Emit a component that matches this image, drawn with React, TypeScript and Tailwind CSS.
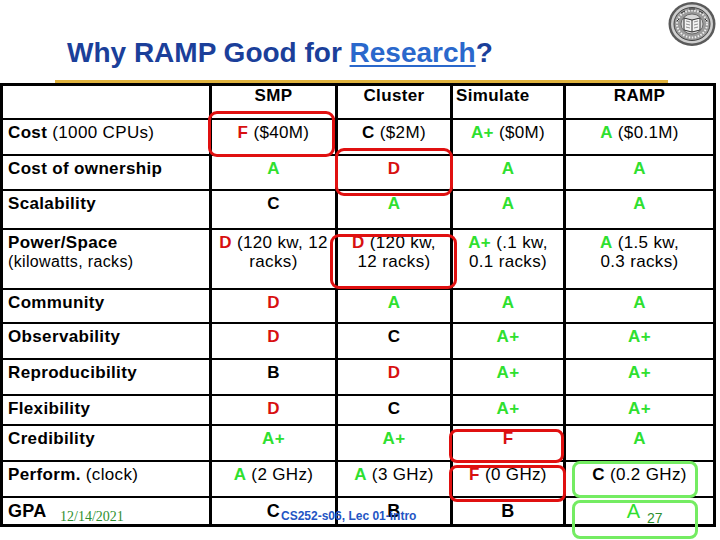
import React from "react"

const G = "text-[#2fe02f]"
const R = "text-[#d81010]"
const K = "text-black"

const Grade = ({ g, c, rest }: { g: string; c: string; rest?: React.ReactNode }) => (
	<>
		<span className={`font-bold ${c}`}>{g}</span>
		{rest}
	</>
)

type Row = { h: string; label: React.ReactNode; cells: React.ReactNode[] }

const rows: Row[] = [
	{
		h: "h-[36px]",
		label: <><b>Cost</b> (1000 CPUs)</>,
		cells: [
			<Grade g="F" c={R} rest=" ($40M)" />,
			<Grade g="C" c={K} rest=" ($2M)" />,
			<Grade g="A+" c={G} rest=" ($0M)" />,
			<Grade g="A" c={G} rest=" ($0.1M)" />,
		],
	},
	{
		h: "h-[35px]",
		label: <b>Cost of ownership</b>,
		cells: [<Grade g="A" c={G} />, <Grade g="D" c={R} />, <Grade g="A" c={G} />, <Grade g="A" c={G} />],
	},
	{
		h: "h-[39px]",
		label: <b>Scalability</b>,
		cells: [<Grade g="C" c={K} />, <Grade g="A" c={G} />, <Grade g="A" c={G} />, <Grade g="A" c={G} />],
	},
	{
		h: "h-[60px]",
		label: <><b>Power/Space</b><br /><span className="text-[16px]">(kilowatts, racks)</span></>,
		cells: [
			<Grade g="D" c={R} rest={<> (120 kw, 12<br />racks)</>} />,
			<Grade g="D" c={R} rest={<> (120 kw,<br />12 racks)</>} />,
			<Grade g="A+" c={G} rest={<> (.1 kw,<br />0.1 racks)</>} />,
			<Grade g="A" c={G} rest={<> (1.5 kw,<br />0.3 racks)</>} />,
		],
	},
	{
		h: "h-[34px]",
		label: <b>Community</b>,
		cells: [<Grade g="D" c={R} />, <Grade g="A" c={G} />, <Grade g="A" c={G} />, <Grade g="A" c={G} />],
	},
	{
		h: "h-[36px]",
		label: <b>Observability</b>,
		cells: [<Grade g="D" c={R} />, <Grade g="C" c={K} />, <Grade g="A+" c={G} />, <Grade g="A+" c={G} />],
	},
	{
		h: "h-[36px]",
		label: <b>Reproducibility</b>,
		cells: [<Grade g="B" c={K} />, <Grade g="D" c={R} />, <Grade g="A+" c={G} />, <Grade g="A+" c={G} />],
	},
	{
		h: "h-[30px]",
		label: <b>Flexibility</b>,
		cells: [<Grade g="D" c={R} />, <Grade g="C" c={K} />, <Grade g="A+" c={G} />, <Grade g="A+" c={G} />],
	},
	{
		h: "h-[36px]",
		label: <b>Credibility</b>,
		cells: [<Grade g="A+" c={G} />, <Grade g="A+" c={G} />, <Grade g="F" c={R} />, <Grade g="A" c={G} />],
	},
	{
		h: "h-[36px]",
		label: <><b>Perform.</b> (clock)</>,
		cells: [
			<Grade g="A" c={G} rest=" (2 GHz)" />,
			<Grade g="A" c={G} rest=" (3 GHz)" />,
			<Grade g="F" c={R} rest=" (0 GHz)" />,
			<Grade g="C" c={K} rest=" (0.2 GHz)" />,
		],
	},
]

const cols = "grid grid-cols-[209px_126px_115px_113px_150px]"
const cell = "border-r-[3px] border-b-2 border-black"
const last = "border-r-[3px] border-b-[3px] border-black pt-[3px]"

const Seal = () => (
	<svg width="50" height="46" viewBox="0 0 50 46">
		<ellipse cx="25" cy="23" rx="23.5" ry="22" fill="#5a5a5a" />
		<ellipse cx="25" cy="23" rx="21" ry="19.5" fill="#cfcfcf" />
		<ellipse cx="25" cy="23" rx="18" ry="16.5" fill="#9a9a9a" stroke="#444" strokeWidth="1" />
		<ellipse cx="25" cy="23" rx="15" ry="13.5" fill="none" stroke="#eee" strokeWidth="2" strokeDasharray="1.5 1.5" />
		<ellipse cx="25" cy="23" rx="11" ry="10" fill="#d8d8d8" stroke="#555" strokeWidth="0.8" />
		<path d="M17 17 L25 19 L33 17 L33 29 L25 31 L17 29 Z" fill="#f2f2f2" stroke="#333" strokeWidth="1" />
		<path d="M25 19 L25 31" stroke="#333" strokeWidth="1" />
		<path d="M19 20 L23 21 M19 23 L23 24 M19 26 L23 27 M27 21 L31 20 M27 24 L31 23 M27 27 L31 26" stroke="#666" strokeWidth="0.7" />
		<path d="M22 8 L28 8 M14 12 L18 10 M32 10 L36 12 M10 20 L12 18 M38 18 L40 20" stroke="#333" strokeWidth="1" />
	</svg>
)

export default function App() {
	return (
		<div className="relative w-[720px] h-[540px] overflow-hidden bg-white font-['Liberation_Sans',Arial,sans-serif] text-black">
			<div className="absolute left-[667px] top-[1px]">
				<Seal />
			</div>

			<div className="mt-[37px] h-[32px] pl-[67px] text-[28px] leading-[32px] font-bold text-[#1b3f9a]">
				Why RAMP Good for <span className="text-[#2a68cc] underline decoration-2 underline-offset-[3px]">Research</span>?
			</div>
			<div className="mt-[11px] ml-[55px] w-[613px] h-[3px] bg-[#e0b33e]" />

			<div className="w-[716px] border-t-[3px] border-l-[3px] border-black text-[17px] leading-[19px] tracking-[0.35px]">
				<div className={`${cols} h-[34px] font-bold`}>
					<div className={cell} />
					<div className={`${cell} text-center`}>SMP</div>
					<div className={`${cell} text-center`}>Cluster</div>
					<div className={`${cell} pl-[3px]`}>Simulate</div>
					<div className={`${cell} text-center`}>RAMP</div>
				</div>
				{rows.map((r, i) => (
					<div key={i} className={`${cols} ${r.h}`}>
						<div className={`${cell} pt-[3px] pl-[5px]`}>{r.label}</div>
						{r.cells.map((c, j) => (
							<div key={j} className={`${cell} pt-[3px] text-center`}>{c}</div>
						))}
					</div>
				))}
				<div className={`${cols} h-[29px] text-[18px] leading-[20px]`}>
					<div className={`${last} pl-[5px] font-bold`}>GPA</div>
					<div className={`${last} text-center font-bold`}>C</div>
					<div className={`${last} text-center font-bold`}>B</div>
					<div className={`${last} text-center font-bold`}>B</div>
					<div className={`${last} pr-[12px] text-center text-[20px] text-[#2fe02f]`}>A</div>
				</div>
			</div>

			{/* slide footer texts over the table */}
			<div className="absolute left-[60px] top-[509px] font-['Liberation_Serif',serif] text-[14px] leading-[16px] text-[#2f8f2f]">12/14/2021</div>
			<div className="absolute left-[281px] top-[509px] text-[12px] leading-[14px] font-bold text-[#2455c4]">CS252-s06, Lec 01-intro</div>
			<div className="absolute left-[647px] top-[510px] text-[14px] leading-[16px] text-[#2f8f2f]">27</div>

			{/* highlight marks */}
			<div className="absolute left-[208px] top-[111px] w-[127px] h-[46px] rounded-[9px] border-[3px] border-[#e01010]" />
			<div className="absolute left-[335px] top-[148px] w-[118px] h-[48px] rounded-[9px] border-[3px] border-[#e01010]" />
			<div className="absolute left-[330px] top-[234px] w-[127px] h-[55px] rounded-[9px] border-[3px] border-[#e01010]" />
			<div className="absolute left-[449px] top-[429px] w-[115px] h-[34px] rounded-[8px] border-[3px] border-[#e01010]" />
			<div className="absolute left-[449px] top-[465px] w-[117px] h-[37px] rounded-[8px] border-[3px] border-[#e01010]" />
			<div className="absolute left-[572px] top-[461px] w-[126px] h-[37px] rounded-[8px] border-[3px] border-[#74ec62]" />
			<div className="absolute left-[572px] top-[500px] w-[126px] h-[39px] rounded-[8px] border-[3px] border-[#74ec62]" />
		</div>
	)
}
